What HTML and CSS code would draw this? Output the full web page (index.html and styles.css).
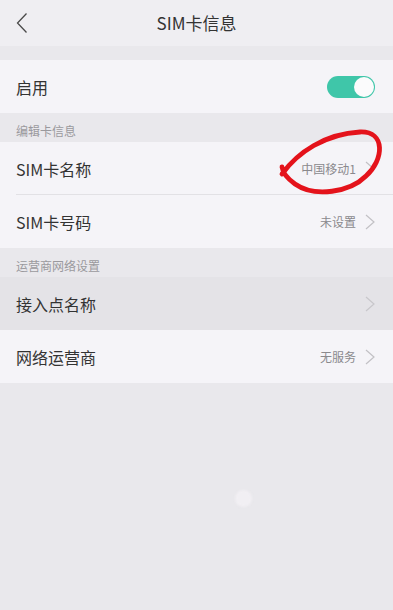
FILE: index.html
```html
<!DOCTYPE html>
<html lang="zh-CN">
<head>
<meta charset="utf-8">
<link rel="stylesheet" href="styles.css">
</head>
<body>
<div class="screen">
  <header class="topbar">
    <svg class="back" width="14" height="22" viewBox="0 0 14 22"><path d="M11.5 1.5 L2.5 11 L11.5 20.5" fill="none" stroke="#4a4a4a" stroke-width="1.3"/></svg>
    <div class="title">SIM卡信息</div>
  </header>
  <div class="gap"></div>
  <div class="row">
    <span class="label">启用</span>
    <span class="toggle"><span class="knob"></span></span>
  </div>
  <div class="section">编辑卡信息</div>
  <div class="row divided">
    <span class="label">SIM卡名称</span>
    <span class="value">中国移动1</span>
    <svg class="chev" width="10" height="16" viewBox="0 0 10 16"><path d="M1 1 L9 8 L1 15" fill="none" stroke="#c2c1c5" stroke-width="1.2"/></svg>
  </div>
  <div class="row">
    <span class="label">SIM卡号码</span>
    <span class="value">未设置</span>
    <svg class="chev" width="10" height="16" viewBox="0 0 10 16"><path d="M1 1 L9 8 L1 15" fill="none" stroke="#c2c1c5" stroke-width="1.2"/></svg>
  </div>
  <div class="section">运营商网络设置</div>
  <div class="row pressed">
    <span class="label">接入点名称</span>
    <svg class="chev" width="10" height="16" viewBox="0 0 10 16"><path d="M1 1 L9 8 L1 15" fill="none" stroke="#c8c7cb" stroke-width="1.2"/></svg>
  </div>
  <div class="row">
    <span class="label">网络运营商</span>
    <span class="value">无服务</span>
    <svg class="chev" width="10" height="16" viewBox="0 0 10 16"><path d="M1 1 L9 8 L1 15" fill="none" stroke="#c2c1c5" stroke-width="1.2"/></svg>
  </div>
  <svg class="annot" width="393" height="610" viewBox="0 0 393 610"><path d="M282 174 C 298 152, 325 134, 360 132 C 386 131, 384 160, 366 176 C 350 192, 315 198, 295 184 C 288 179, 283 174, 282 167" fill="none" stroke="#e4131b" stroke-width="4.8" stroke-linecap="round" stroke-linejoin="round"/></svg>
  <span class="touch"></span>
</div>
</body>
</html>
```
FILE: styles.css
```css
* { box-sizing: border-box; }
html, body { margin: 0; padding: 0; }
body {
  background: #e9e8ec;
  font-family: "Noto Sans CJK SC", "Noto Sans", "Liberation Sans", sans-serif;
  color: #333;
}
.screen {
  position: relative;
  width: 393px;
  height: 610px;
  overflow: hidden;
  background: #e9e8ec;
}
.topbar {
  position: relative;
  height: 46px;
  background: #efeef2;
  display: flex;
  align-items: center;
  justify-content: center;
}
.back {
  position: absolute;
  left: 15px;
  top: 12px;
}
.title {
  font-size: 17px;
  color: #333;
  margin-top: -2px;
}
.gap { height: 14px; }
.row {
  height: 53px;
  background: #f5f4f8;
  display: flex;
  align-items: center;
  padding: 0 18px 0 16px;
  position: relative;
}
.row.divided::after {
  content: "";
  position: absolute;
  left: 16px;
  right: 0;
  bottom: 0;
  height: 1px;
  background: #e2e1e5;
}
.row.pressed { background: #e4e3e7; }
.label {
  font-size: 16px;
  color: #333;
  flex: 1;
}
.value {
  font-size: 12px;
  color: #8a898d;
  margin-right: 9px;
}
.chev { display: block; }
.section {
  height: 29px;
  padding: 10px 16px 0;
  font-size: 12px;
  color: #9a999d;
  line-height: 16px;
}
.toggle {
  width: 48px;
  height: 22px;
  border-radius: 11px;
  background: #3fc6a9;
  position: relative;
  display: block;
}
.knob {
  position: absolute;
  right: 1px;
  top: 1px;
  width: 20px;
  height: 20px;
  border-radius: 50%;
  background: #fbfbfc;
}
.annot {
  position: absolute;
  left: 0;
  top: 0;
  pointer-events: none;
}
.touch {
  position: absolute;
  left: 235px;
  top: 490px;
  width: 17px;
  height: 17px;
  border-radius: 50%;
  background: #f1eff3;
  filter: blur(1px);
}
```
